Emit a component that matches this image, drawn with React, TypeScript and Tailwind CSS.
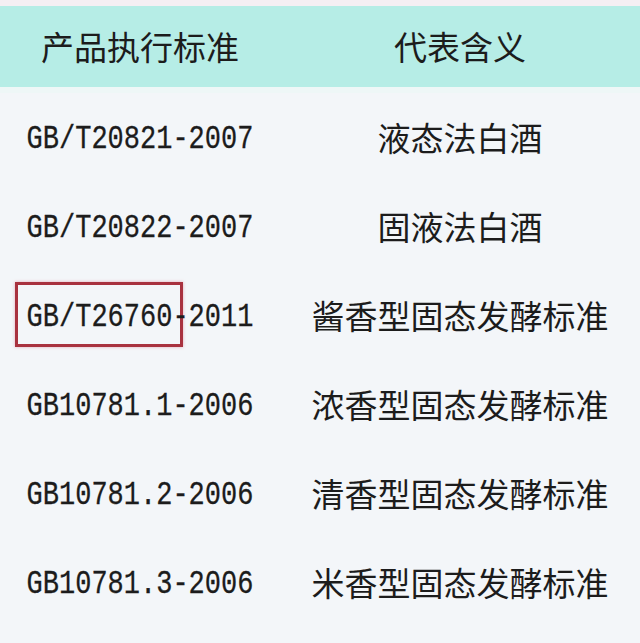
const rows = [
  { code: "GB/T20821-2007", meaning: "液态法白酒" },
  { code: "GB/T20822-2007", meaning: "固液法白酒" },
  { code: "GB/T26760-2011", meaning: "酱香型固态发酵标准", mark: "GB/T26760" },
  { code: "GB10781.1-2006", meaning: "浓香型固态发酵标准" },
  { code: "GB10781.2-2006", meaning: "清香型固态发酵标准" },
  { code: "GB10781.3-2006", meaning: "米香型固态发酵标准" },
];

const cjk = "font-['Noto_Sans_CJK_SC',sans-serif]";
const mono = "font-['Liberation_Mono',monospace] [-webkit-text-stroke:0.25px_#1c1c1c]";

function Code({ code, mark }: { code: string; mark?: string }) {
  if (!mark) {
    return <span className="inline-block scale-y-[1.25] translate-y-[2px]">{code}</span>;
  }
  return (
    <span className="inline-block">
      <span className="relative inline-block">
        <span className="inline-block scale-y-[1.25] translate-y-[2px]">{mark}</span>
        <span className="absolute -left-[12px] -right-[11px] -top-[20px] -bottom-[18px] border-[3px] border-[#a8323f] shadow-[0_0_3px_rgba(220,120,140,0.6)]" />
      </span>
      <span className="inline-block scale-y-[1.25] translate-y-[2px]">{code.slice(mark.length)}</span>
    </span>
  );
}

export default function App() {
  return (
    <div className="w-[640px] h-[643px] bg-[#f3f6f9] text-[#1c1c1c] overflow-hidden">
      <div className="h-[6px] bg-[#f5eff3]" />
      <div className={`grid grid-cols-[280px_360px] h-[81px] items-center bg-[#b6ede6] text-[33px] ${cjk}`}>
        <div className="text-center">产品执行标准</div>
        <div className="text-center">代表含义</div>
      </div>
      <div className="h-[6px] bg-[#eef7f7]" />
      {rows.map((r) => (
        <div key={r.code} className="grid grid-cols-[280px_360px] h-[89px] items-center">
          <div className={`text-center text-[27px] leading-none ${mono}`}>
            <Code code={r.code} mark={r.mark} />
          </div>
          <div className={`text-center text-[33px] leading-none ${cjk}`}>{r.meaning}</div>
        </div>
      ))}
    </div>
  );
}
